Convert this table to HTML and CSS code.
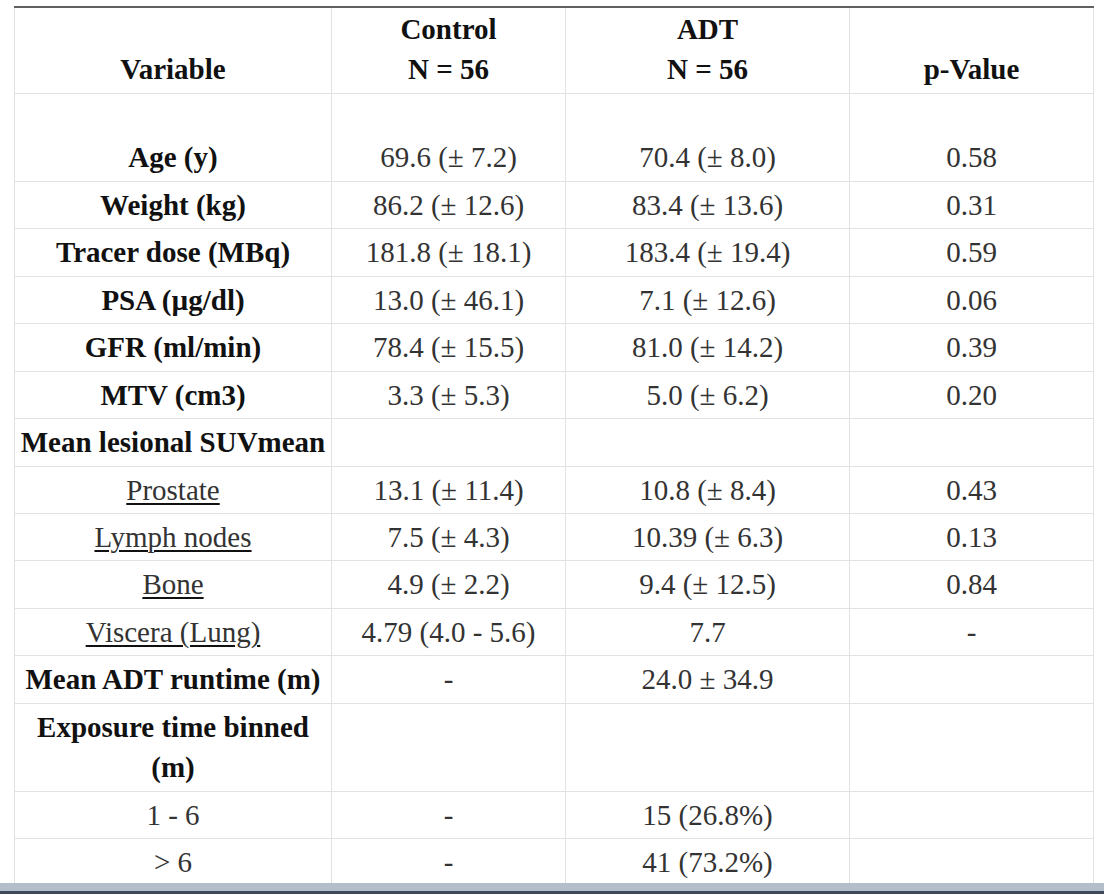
FILE: index.html
```html
<!DOCTYPE html>
<html>
<head>
<meta charset="utf-8">
<link rel="stylesheet" href="styles.css">
</head>
<body>
<div class="page">
<table class="stats">
<colgroup>
<col class="c1"><col class="c2"><col class="c3"><col class="c4">
</colgroup>
<thead>
<tr>
<th>Variable</th>
<th>Control<br>N = 56</th>
<th>ADT<br>N = 56</th>
<th>p-Value</th>
</tr>
</thead>
<tbody>
<tr><td class="var">&nbsp;<br>Age (y)</td><td>69.6 (± 7.2)</td><td>70.4 (± 8.0)</td><td>0.58</td></tr>
<tr><td class="var">Weight (kg)</td><td>86.2 (± 12.6)</td><td>83.4 (± 13.6)</td><td>0.31</td></tr>
<tr><td class="var">Tracer dose (MBq)</td><td>181.8 (± 18.1)</td><td>183.4 (± 19.4)</td><td>0.59</td></tr>
<tr><td class="var">PSA (µg/dl)</td><td>13.0 (± 46.1)</td><td>7.1 (± 12.6)</td><td>0.06</td></tr>
<tr><td class="var">GFR (ml/min)</td><td>78.4 (± 15.5)</td><td>81.0 (± 14.2)</td><td>0.39</td></tr>
<tr><td class="var">MTV (cm3)</td><td>3.3 (± 5.3)</td><td>5.0 (± 6.2)</td><td>0.20</td></tr>
<tr><td class="var tight">Mean lesional SUVmean</td><td></td><td></td><td></td></tr>
<tr><td class="sub">Prostate</td><td>13.1 (± 11.4)</td><td>10.8 (± 8.4)</td><td>0.43</td></tr>
<tr><td class="sub">Lymph nodes</td><td>7.5 (± 4.3)</td><td>10.39 (± 6.3)</td><td>0.13</td></tr>
<tr><td class="sub">Bone</td><td>4.9 (± 2.2)</td><td>9.4 (± 12.5)</td><td>0.84</td></tr>
<tr><td class="sub">Viscera (Lung)</td><td>4.79 (4.0 - 5.6)</td><td>7.7</td><td>-</td></tr>
<tr><td class="var">Mean ADT runtime (m)</td><td>-</td><td>24.0 ± 34.9</td><td></td></tr>
<tr><td class="var">Exposure time binned<br>(m)</td><td></td><td></td><td></td></tr>
<tr><td>1 - 6</td><td>-</td><td>15 (26.8%)</td><td></td></tr>
<tr><td>&gt; 6</td><td>-</td><td>41 (73.2%)</td><td></td></tr>
</tbody>
</table>
</div>
<div class="taskbar"></div>
</body>
</html>
```

FILE: styles.css
```css
html, body {
  margin: 0;
  padding: 0;
  background: #ffffff;
}

.page {
  padding: 6px 0 0 14px;
  height: 877px;
  overflow: hidden;
}

.stats {
  border-collapse: collapse;
  table-layout: fixed;
  width: 1079px;
  font-family: "Liberation Serif", "Times New Roman", serif;
  font-size: 29px;
  line-height: 40.45px;
  color: #333333;
  border-top: 2px solid #606060;
}

.c1 { width: 317px; }
.c2 { width: 234px; }
.c3 { width: 284px; }
.c4 { width: 244px; }

.stats th,
.stats td {
  border: 1px solid #e2e2e2;
  padding: 3px 2px;
  text-align: center;
  vertical-align: bottom;
  white-space: nowrap;
}

.stats thead tr th {
  border-top: 2px solid #606060;
  padding-top: 1px;
}

.stats th {
  font-weight: bold;
  color: #111111;
}

.stats td.var {
  font-weight: bold;
  color: #111111;
}

.stats td.tight {
  padding-left: 0;
  padding-right: 0;
}

.stats td.sub {
  text-decoration: underline;
  text-decoration-color: #111111;
  text-underline-offset: 3px;
  text-decoration-thickness: 2px;
}

.taskbar {
  height: 8px;
  background: #b4becb;
  border-bottom: 3px solid #3e4a5b;
}
```
